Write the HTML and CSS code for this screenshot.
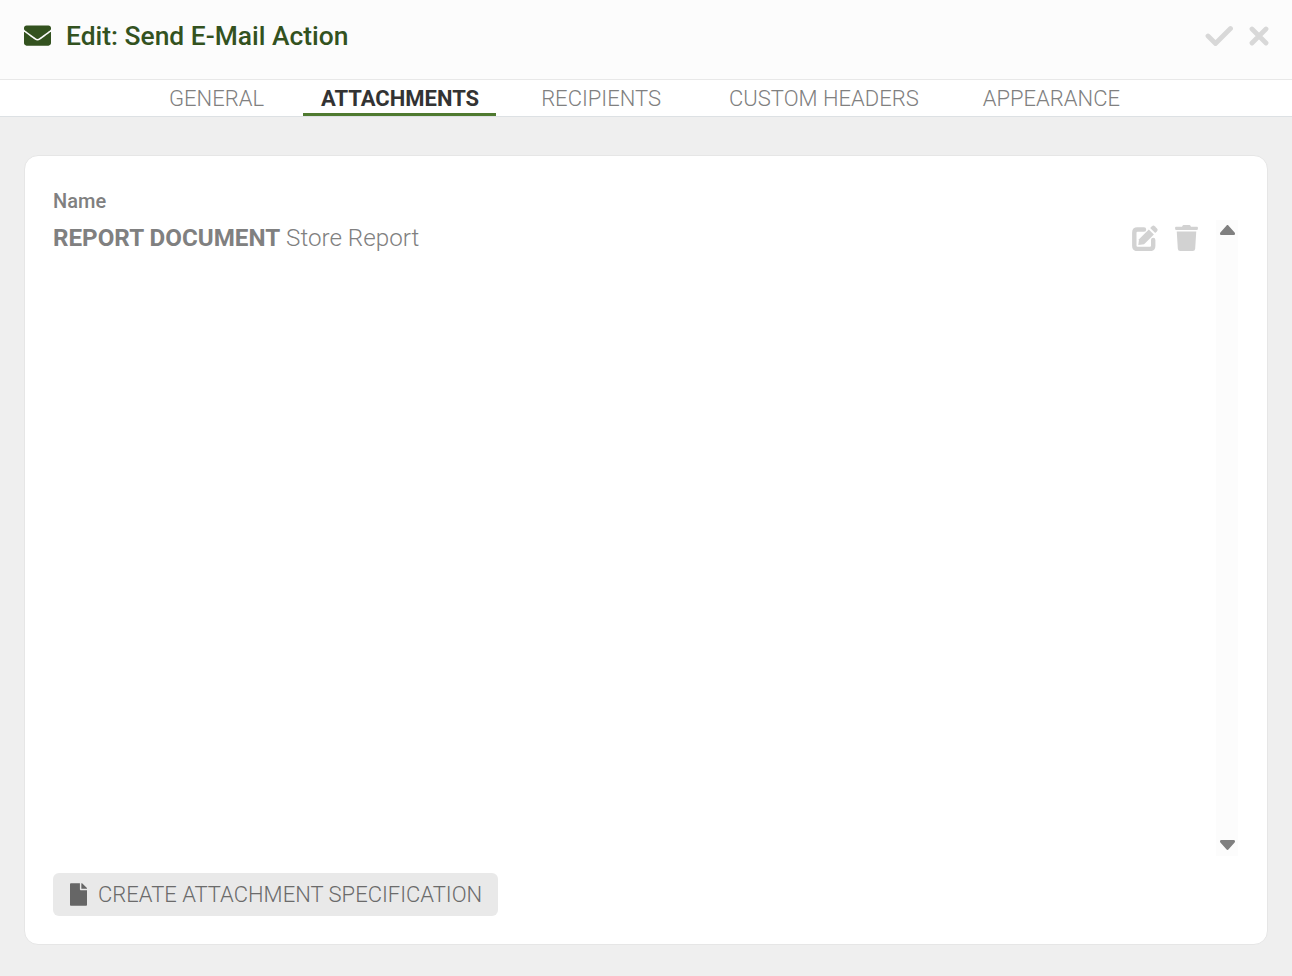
FILE: index.html
```html
<!DOCTYPE html>
<html>
  <head>
    <meta charset="utf-8">
    <title>Edit: Send E-Mail Action</title>
    <link rel="stylesheet" href="styles.css">
  </head>
  <body>
    <header class="header">
      <svg class="header__icon" viewBox="0 0 512 512">
        <path d="M502.3 190.8c3.9-3.1 9.7-.2 9.7 4.7V400c0 26.5-21.5 48-48 48H48c-26.5 0-48-21.5-48-48V195.6c0-5 5.7-7.8 9.7-4.7 22.4 17.4 52.1 39.5 154.1 113.6 21.1 15.4 56.7 47.8 92.2 47.6 35.7.3 72-32.8 92.3-47.6 102-74.1 131.6-96.3 154-113.7zM256 320c23.2.4 56.6-29.2 73.4-41.4 132.7-96.3 142.8-104.7 173.4-128.7 5.8-4.5 9.2-11.5 9.2-18.9v-19c0-26.5-21.5-48-48-48H48C21.5 64 0 85.5 0 112v19c0 7.4 3.4 14.3 9.2 18.9 30.6 23.9 40.7 32.4 173.4 128.7 16.8 12.2 50.2 41.8 73.4 41.4z" />
      </svg>
      <h1 class="header__title">Edit: Send E-Mail Action</h1>
      <div class="header__actions">
        <svg class="action action--check" viewBox="0 0 28 22">
          <path d="M3 11 L10.5 18.5 L25.5 3.5" />
        </svg>
        <svg class="action action--close" viewBox="0 0 20 20">
          <path d="M3 3 L17 17 M17 3 L3 17" />
        </svg>
      </div>
    </header>

    <nav class="tabs">
      <a class="tab">GENERAL</a>
      <a class="tab tab--active">ATTACHMENTS</a>
      <a class="tab">RECIPIENTS</a>
      <a class="tab">CUSTOM HEADERS</a>
      <a class="tab">APPEARANCE</a>
    </nav>

    <main class="content">
      <section class="card">
        <div class="card__label">Name</div>
        <div class="card__body">
          <div class="list">
            <div class="row">
              <div class="row__text"><strong>REPORT DOCUMENT</strong> Store Report</div>
              <svg class="row__icon row__icon--edit" viewBox="0 0 26 26">
                <path class="edit-box" d="M12 4.5 H5.5 Q2.3 4.5 2.3 7.7 V20.8 Q2.3 24 5.5 24 H18 Q21.2 24 21.2 20.8 V15" />
                <path d="M6.3 20 L7 14.2 L16.8 4.4 L21.9 9.5 L12.1 19.3 Z" />
                <path d="M18.2 3 L20 1.2 Q21.4 -.1 22.8 1.2 L25 3.4 Q26.3 4.8 25 6.2 L23.2 8 Z" />
              </svg>
              <svg class="row__icon row__icon--trash" viewBox="0 0 448 512">
                <path d="M432 32H312l-9.4-18.7A24 24 0 0 0 281.1 0H166.8a23.72 23.72 0 0 0-21.4 13.3L136 32H16A16 16 0 0 0 0 48v32a16 16 0 0 0 16 16h416a16 16 0 0 0 16-16V48a16 16 0 0 0-16-16zM53.2 467a48 48 0 0 0 47.9 45h245.8a48 48 0 0 0 47.9-45L416 128H32z" />
              </svg>
            </div>
          </div>
          <div class="scrollbar">
            <svg class="scrollbar__arrow" viewBox="17 57 286 167" preserveAspectRatio="none">
              <path d="M279 224H41c-21.4 0-32.1-25.9-17-41L143 64c9.4-9.4 24.6-9.4 33.9 0l119 119c15.2 15.1 4.5 41-16.9 41z" />
            </svg>
            <svg class="scrollbar__arrow scrollbar__arrow--down" viewBox="17 57 286 167" preserveAspectRatio="none">
              <path d="M279 224H41c-21.4 0-32.1-25.9-17-41L143 64c9.4-9.4 24.6-9.4 33.9 0l119 119c15.2 15.1 4.5 41-16.9 41z" />
            </svg>
          </div>
        </div>
        <div class="card__footer">
          <button class="button">
            <svg class="button__icon" viewBox="0 0 384 512">
              <path d="M224 136V0H24C10.7 0 0 10.7 0 24v464c0 13.3 10.7 24 24 24h336c13.3 0 24-10.7 24-24V160H248c-13.2 0-24-10.8-24-24zm160-14.1v6.1H256V0h6.1c6.4 0 12.5 2.5 17 7l97.9 98c4.5 4.5 7 10.6 7 16.9z" />
            </svg>
            CREATE ATTACHMENT SPECIFICATION
          </button>
        </div>
      </section>
    </main>
  </body>
</html>
```

FILE: styles.css
```css
html,
body {
  height: 100%;
}
body {
  display: flex;
  flex-direction: column;
  margin: 0;
  font-family: Roboto, sans-serif;
  background-color: #efefef;
}
.header {
  display: flex;
  flex: none;
  align-items: center;
  height: 71px;
  padding: 0 23px 8px 24px;
  border-bottom: 1px solid #e8e8e8;
  background-color: #fcfcfc;
}
.header__icon {
  width: 27px;
  height: 27px;
  margin-right: 15px;
  fill: #33521f;
}
.header__title {
  margin: 0;
  font-size: 26.4px;
  font-weight: 500;
  color: #33521f;
}
.header__actions {
  display: flex;
  align-items: center;
  margin-left: auto;
}
.action {
  fill: none;
  stroke: #d8d8d8;
  stroke-width: 4.8px;
  stroke-linecap: round;
  stroke-linejoin: round;
}
.action--check {
  width: 28px;
  height: 22px;
  margin-right: 16px;
}
.action--close {
  width: 20px;
  height: 20px;
}
.tabs {
  display: flex;
  flex: none;
  justify-content: center;
  height: 36px;
  padding-right: 3px;
  border-bottom: 1px solid #dde1e4;
  background-color: #fff;
}
.tab {
  margin-left: 28px;
  padding: 1px 18px 0;
  font-size: 22px;
  font-weight: 300;
  line-height: 36px;
  color: #808080;
}
.tab:first-child {
  margin-left: 0;
}
.tab--active {
  height: 32px;
  margin-left: 21px;
  padding-right: 17px;
  border-bottom: 3px solid #4f7a30;
  font-weight: 700;
  color: #333;
}
.tab--active + .tab {
  margin-left: 27px;
}
.tab--active + .tab + .tab {
  margin-left: 32px;
}
.content {
  display: flex;
  flex: 1;
  min-height: 0;
  padding: 38px 24px 31px;
}
.card {
  display: flex;
  flex: 1;
  flex-direction: column;
  padding: 33px 29px 28px 28px;
  border: 1px solid #e6e6e6;
  border-radius: 14px;
  background-color: #fff;
}
.card__label {
  font-size: 20px;
  font-weight: 500;
  line-height: 24px;
  color: #808080;
}
.card__body {
  display: flex;
  flex: 1;
  min-height: 0;
  margin-top: 7px;
}
.list {
  flex: 1;
  padding-right: 18px;
}
.row {
  display: flex;
  align-items: center;
  padding-top: 4px;
}
.row__text {
  flex: 1;
  font-size: 24.2px;
  font-weight: 300;
  color: #808080;
}
.row__text strong {
  font-weight: 700;
}
.row__icon {
  height: 26px;
  fill: #d2d2d2;
}
.row__icon--edit {
  width: 26px;
  margin-right: 17px;
}
.edit-box {
  fill: none;
  stroke: #d2d2d2;
  stroke-width: 4.4px;
  stroke-linecap: round;
}
.row__icon--trash {
  width: 23px;
}
.scrollbar {
  display: flex;
  flex-direction: column;
  justify-content: space-between;
  align-items: center;
  width: 22px;
  padding: 5px 0 6px;
  background-color: #fcfcfc;
}
.scrollbar__arrow {
  width: 15px;
  height: 10px;
  fill: #808080;
}
.scrollbar__arrow--down {
  transform: rotate(180deg);
}
.card__footer {
  margin-top: 17px;
}
.button {
  display: inline-flex;
  align-items: center;
  height: 43px;
  padding: 0 16px 0 17px;
  border: 0;
  border-radius: 6px;
  font-family: inherit;
  font-size: 22px;
  font-weight: 300;
  color: #6b6b6b;
  background-color: #e9e9e9;
}
.button__icon {
  width: 17px;
  height: 23px;
  margin-right: 11px;
  fill: #666;
}
```
